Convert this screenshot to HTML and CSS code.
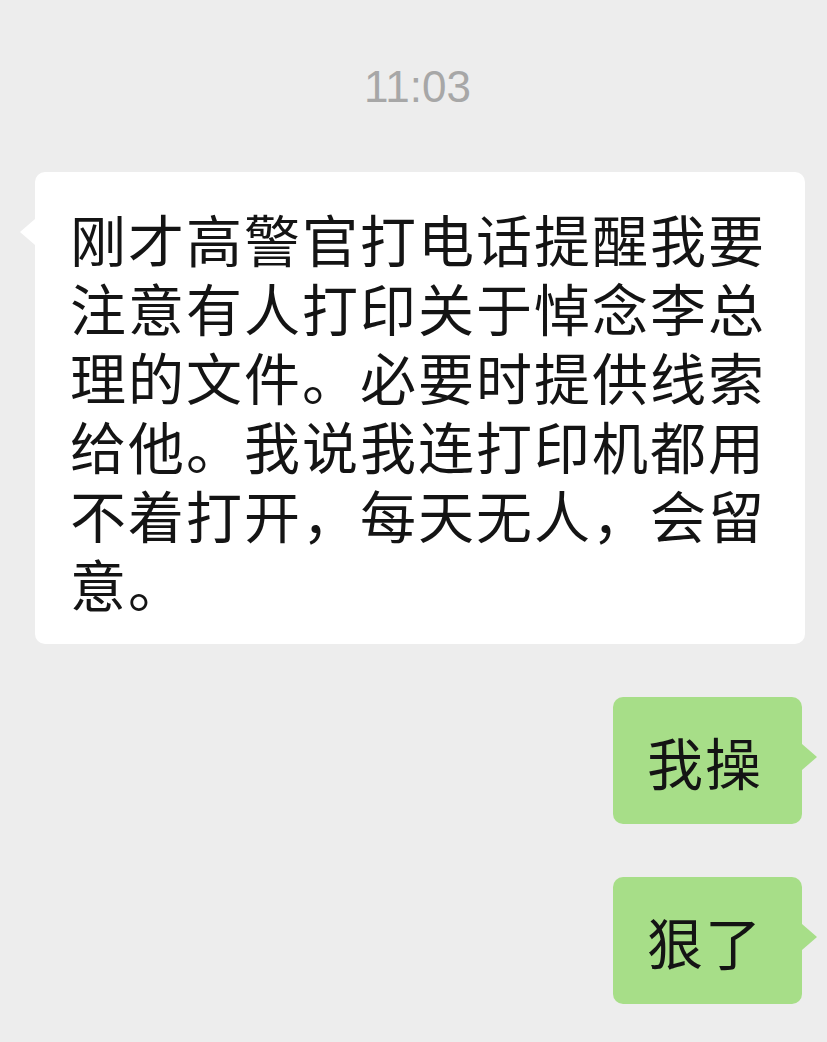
FILE: index.html
```html
<!DOCTYPE html>
<html>
  <head>
    <meta charset="utf-8" />
    <title>Chat</title>
    <link rel="stylesheet" href="styles.css">
  </head>
  <body>
    <div class="chat">
      <div class="time">11:03</div>
      <div class="row left">
        <div class="bubble white">刚才高警官打电话提醒我要<br>注意有人打印关于悼念李总<br>理的文件。必要时提供线索<br>给他。我说我连打印机都用<br>不着打开，每天无人，会留<br>意。</div>
      </div>
      <div class="row right">
        <div class="bubble green">我操</div>
      </div>
      <div class="row right">
        <div class="bubble green">狠了</div>
      </div>
    </div>
  </body>
</html>
```

FILE: styles.css
```css
html {
  background-color: #ededed;
}

body {
  margin: 0;
  font-family: "Noto Sans CJK SC", "Noto Sans", sans-serif;
  color: #141414;
}

.chat {
  display: flex;
  flex-direction: column;
  padding: 65px 0 0 0;
}

.time {
  font-family: "Liberation Sans", Arial, sans-serif;
  font-size: 44px;
  line-height: 44px;
  color: #a7a7a7;
  text-align: center;
  margin: 0 0 63px 8px;
}

.row {
  display: flex;
}

.row.left {
  justify-content: flex-start;
  padding-left: 35px;
}

.row.right {
  justify-content: flex-end;
  padding-right: 25px;
  margin-top: 53px;
}

.bubble {
  position: relative;
  font-size: 56px;
  line-height: 69px;
  letter-spacing: 2px;
  border-radius: 10px;
  white-space: nowrap;
}

.bubble.white {
  background: #ffffff;
  width: 701px;
  padding: 31px 34px 27px 35px;
}

.bubble.green {
  background: #a7de88;
  width: 116px;
  padding: 29px 39px 29px 34px;
}

.bubble:after {
  content: '';
  position: absolute;
  top: 47px;
  width: 0;
  height: 0;
  border-top: 13px solid transparent;
  border-bottom: 13px solid transparent;
}

.bubble.white:after {
  left: -15px;
  border-right: 15px solid #ffffff;
}

.bubble.green:after {
  right: -15px;
  border-left: 15px solid #a7de88;
}
```
